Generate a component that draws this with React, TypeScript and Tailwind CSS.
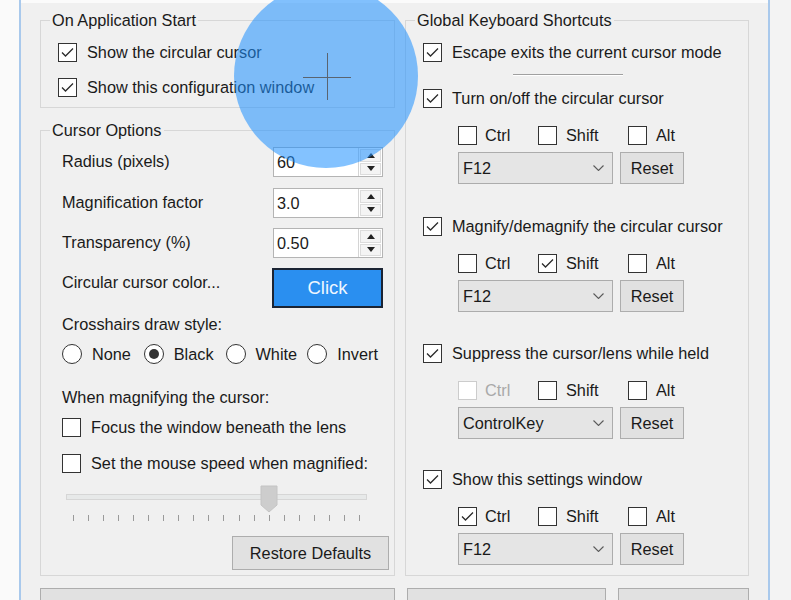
import clsx from "clsx";

function Check({ checked, disabled }: { checked?: boolean; disabled?: boolean }) {
  return (
    <span
      className={clsx(
        "w-[19px] h-[19px] shrink-0 border bg-white flex items-center justify-center",
        disabled ? "border-[#cccccc]" : "border-[#333333]",
      )}
    >
      {checked && (
        <svg width="17" height="17" viewBox="0 0 17 17">
          <path d="M3 8.5 L6.5 12 L14 4.5" fill="none" stroke="#2b2b2b" strokeWidth="1.3" />
        </svg>
      )}
    </span>
  );
}

function CheckRow({ label, checked, gap = "gap-[10px]" }: { label: string; checked?: boolean; gap?: string }) {
  return (
    <div className={clsx("h-[20px] flex items-center", gap)}>
      <Check checked={checked} />
      <span className="whitespace-nowrap">{label}</span>
    </div>
  );
}

function Radio({ label, checked }: { label: string; checked?: boolean }) {
  return (
    <div className="w-[82px] h-[20px] flex items-center gap-[10px]">
      <span className="w-[20px] h-[20px] shrink-0 rounded-full border border-[#333333] bg-white flex items-center justify-center">
        {checked && <span className="w-[10px] h-[10px] rounded-full bg-[#333333]" />}
      </span>
      <span>{label}</span>
    </div>
  );
}

function SpinBox({ value }: { value: string }) {
  return (
    <div className="w-[110px] h-[30px] border border-[#b4b4b4] bg-white flex">
      <span className="flex-1 pl-[3px] flex items-center">{value}</span>
      <div className="w-[24px] flex flex-col border-l border-[#d4d4d4] p-[1px] gap-[1px]">
        <div className="flex-1 bg-[#f4f4f4] border border-[#dcdcdc] flex items-center justify-center">
          <svg width="8" height="5" viewBox="0 0 8 5">
            <polygon points="0,5 8,5 4,0" fill="#222" />
          </svg>
        </div>
        <div className="flex-1 bg-[#f4f4f4] border border-[#dcdcdc] flex items-center justify-center">
          <svg width="8" height="5" viewBox="0 0 8 5">
            <polygon points="0,0 8,0 4,5" fill="#222" />
          </svg>
        </div>
      </div>
    </div>
  );
}

function Group({ title, className, children }: { title: string; className?: string; children: React.ReactNode }) {
  return (
    <div className={clsx("relative border border-[#d7d7d7]", className)}>
      <span className="absolute -top-[11px] left-[9px] px-[2px] bg-[#f0f0f0] whitespace-nowrap">{title}</span>
      {children}
    </div>
  );
}

function Shortcut({
  label,
  mods,
  keyName,
  ctrlDisabled,
  className,
}: {
  label: string;
  mods: [boolean, boolean, boolean];
  keyName: string;
  ctrlDisabled?: boolean;
  className?: string;
}) {
  return (
    <div className={className}>
      <CheckRow label={label} checked />
      <div className="pl-[35px]">
        <div className="mt-[17px] h-[20px] flex items-center">
          <div className="w-[80px] flex items-center gap-[8px]">
            <Check checked={mods[0]} disabled={ctrlDisabled} />
            <span className={ctrlDisabled ? "text-[#a9a9a9]" : ""}>Ctrl</span>
          </div>
          <div className="w-[90px] flex items-center gap-[9px]">
            <Check checked={mods[1]} />
            <span>Shift</span>
          </div>
          <div className="flex items-center gap-[9px]">
            <Check checked={mods[2]} />
            <span>Alt</span>
          </div>
        </div>
        <div className="mt-[7px] flex gap-[7px]">
          <div className="w-[155px] h-[32px] bg-[#e5e5e5] border border-[#acacac] flex items-center justify-between pl-[4px] pr-[8px]">
            <span>{keyName}</span>
            <svg width="11" height="6" viewBox="0 0 11 6">
              <path d="M0.5 0.5 L5.5 5.5 L10.5 0.5" fill="none" stroke="#5a5a5a" strokeWidth="1.1" />
            </svg>
          </div>
          <div className="w-[64px] h-[32px] bg-[#e1e1e1] border border-[#adadad] flex items-center justify-center">
            Reset
          </div>
        </div>
      </div>
    </div>
  );
}

export default function App() {
  const ticks = Array.from({ length: 20 });

  return (
    <div className="relative w-[791px] h-[600px] overflow-hidden flex bg-[#f6f6f6] font-['Liberation_Sans',Arial,sans-serif] text-[16.3px] leading-[20px] text-[#1a1a1a]">
      <div className="w-[19px] shrink-0 bg-[#fafafa]" />

      <div className="w-[751px] shrink-0 border-x-2 border-[#a9c9ec] bg-[#f0f0f0] pl-[19px]">
        <div className="-ml-[19px] h-[3px] bg-[#fbfbfb]" />
        <div className="mt-[17px] flex gap-[10px]">
          {/* left column */}
          <div className="w-[355px] flex flex-col">
            <Group title="On Application Start" className="pt-[21px] pb-[10px] pl-[17px]">
              <div className="flex flex-col gap-[15px]">
                <CheckRow label="Show the circular cursor" checked />
                <CheckRow label="Show this configuration window" checked />
              </div>
            </Group>

            <Group title="Cursor Options" className="mt-[22px] flex-1 pt-[16px] pl-[21px] pr-[5px] pb-[5px] flex flex-col">
              <div className="pr-[6px]">
                <div className="h-[30px] flex items-center justify-between">
                  <span className="mb-[3px]">Radius (pixels)</span>
                  <SpinBox value="60" />
                </div>
                <div className="mt-[11px] h-[30px] flex items-center justify-between">
                  <span className="mb-[3px]">Magnification factor</span>
                  <SpinBox value="3.0" />
                </div>
                <div className="mt-[10px] h-[30px] flex items-center justify-between">
                  <span className="mb-[3px]">Transparency (%)</span>
                  <SpinBox value="0.50" />
                </div>
                <div className="mt-[10px] flex items-start justify-between">
                  <span className="mt-[4px]">Circular cursor color...</span>
                  <div className="w-[111px] h-[40px] bg-[#2a8ff0] border-2 border-[#1b2433] flex items-center justify-center text-[18.5px] text-[#eef6ff]">
                    Click
                  </div>
                </div>
              </div>

              <div className="mt-[6px]">Crosshairs draw style:</div>
              <div className="mt-[10px] flex">
                <Radio label="None" />
                <Radio label="Black" checked />
                <Radio label="White" />
                <Radio label="Invert" />
              </div>

              <div className="mt-[23px]">When magnifying the cursor:</div>
              <div className="mt-[10px]">
                <CheckRow label="Focus the window beneath the lens" />
              </div>
              <div className="mt-[16px]">
                <CheckRow label="Set the mouse speed when magnified:" />
              </div>

              <div className="mt-[12px] ml-[4px] w-[301px]">
                <div className="relative h-[28px]">
                  <div className="absolute left-0 right-0 top-[9px] h-[6px] bg-[#e7e9e9] border border-[#d6d6d6]" />
                  <svg className="absolute left-[194px] top-0" width="18" height="28" viewBox="0 0 18 28">
                    <path d="M1 1 H17 V20 L9 27 L1 20 Z" fill="#cdcdcd" stroke="#c4c4c4" strokeWidth="1" />
                  </svg>
                </div>
                <div className="ml-[7px] w-[287px] h-[6px] mt-[2px] flex justify-between">
                  {ticks.map((_, i) => (
                    <span key={i} className="w-px h-full bg-[#9a9a9a]" />
                  ))}
                </div>
              </div>

              <div className="mt-[15px] self-end w-[157px] h-[34px] bg-[#e1e1e1] border border-[#adadad] flex items-center justify-center">
                Restore Defaults
              </div>
            </Group>
          </div>

          {/* right column */}
          <Group title="Global Keyboard Shortcuts" className="w-[344px] pt-[21px] pl-[17px] pb-[10px]">
            <CheckRow label="Escape exits the current cursor mode" checked />
            <div className="mt-[12px] ml-[90px] w-[110px] h-[2px] border-t border-[#a0a0a0] border-b border-b-white" />
            <Shortcut className="mt-[12px]" label="Turn on/off the circular cursor" mods={[false, false, false]} keyName="F12" />
            <Shortcut className="mt-[32px]" label="Magnify/demagnify the circular cursor" mods={[false, true, false]} keyName="F12" />
            <Shortcut className="mt-[31px]" label="Suppress the cursor/lens while held" mods={[false, false, false]} keyName="ControlKey" ctrlDisabled />
            <Shortcut className="mt-[30px]" label="Show this settings window" mods={[true, false, false]} keyName="F12" />
          </Group>
        </div>

        <div className="mt-[12px] flex gap-[12px]">
          <div className="w-[355px] h-[30px] bg-[#e1e1e1] border border-[#adadad]" />
          <div className="w-[199px] h-[30px] bg-[#e1e1e1] border border-[#adadad]" />
          <div className="w-[131px] h-[30px] bg-[#e1e1e1] border border-[#adadad]" />
        </div>
      </div>

      <div className="flex-1 bg-[#f3f3f3]" />

      {/* magnifier lens overlay */}
      <div className="absolute left-[234px] -top-[16px] w-[184px] h-[184px] rounded-full bg-[rgba(30,144,255,0.55)]">
        <span className="absolute left-[69px] top-[93px] w-[48px] h-px bg-[#5a6470]" />
        <span className="absolute left-[93px] top-[69px] w-px h-[47px] bg-[#5a6470]" />
      </div>
    </div>
  );
}
